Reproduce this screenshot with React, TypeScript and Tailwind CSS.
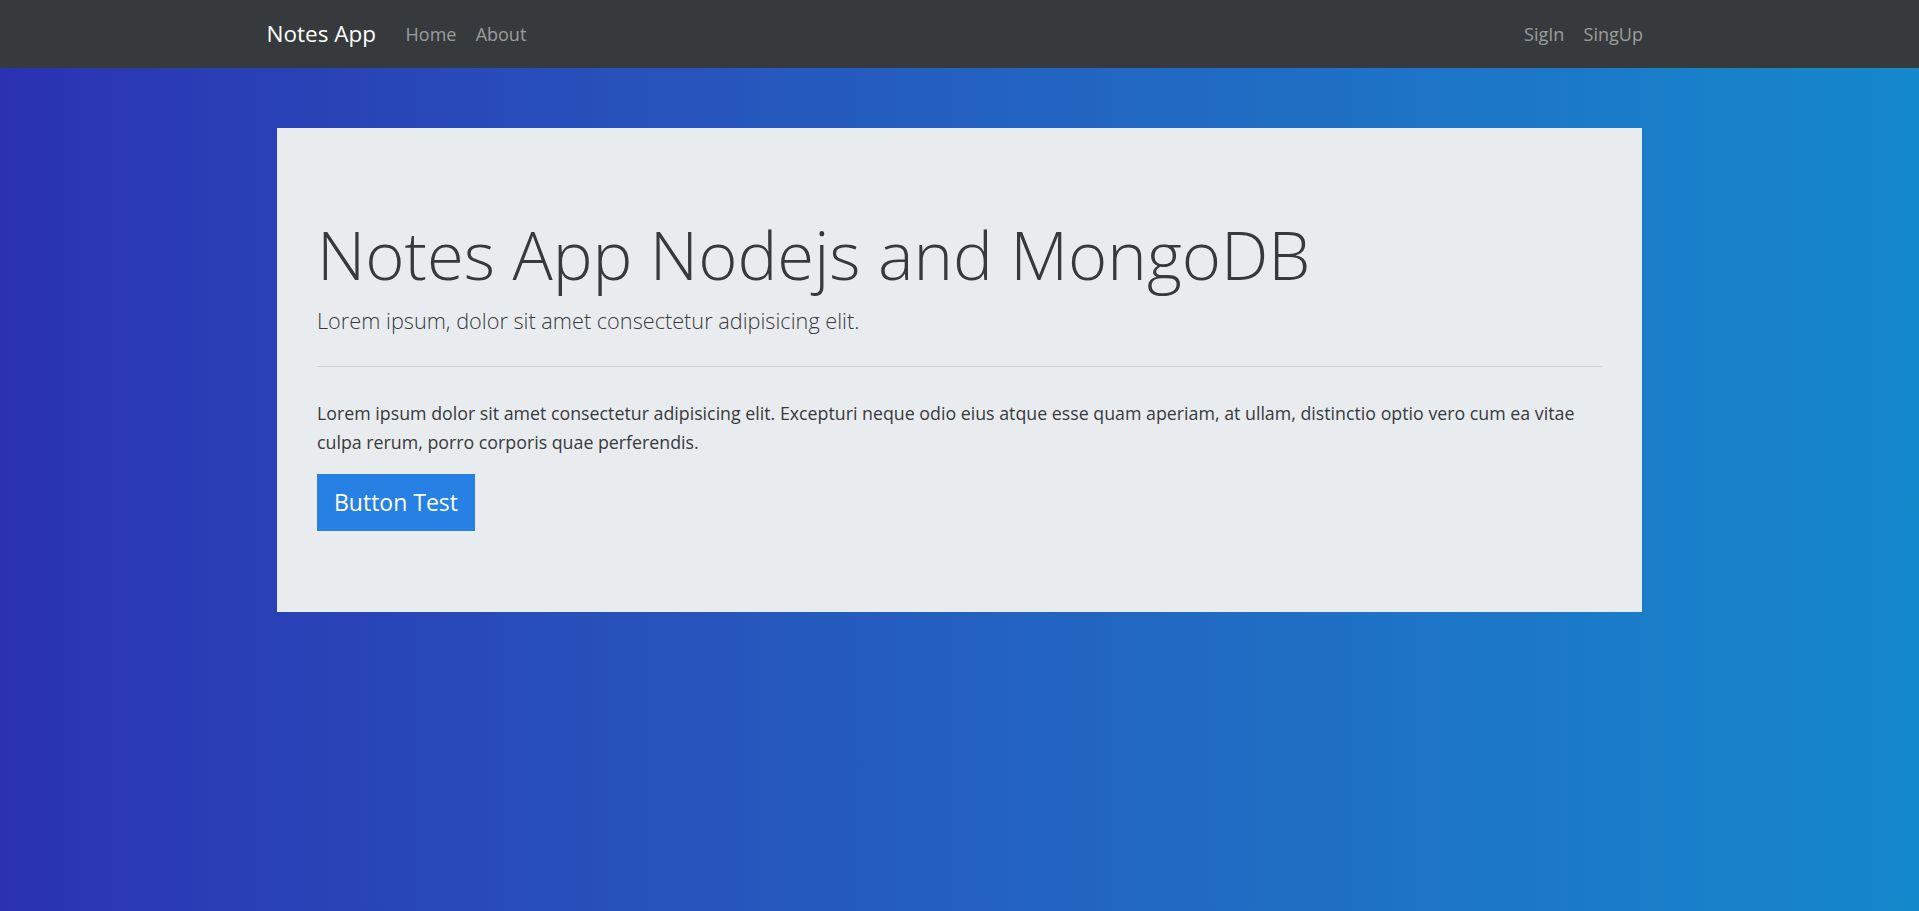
import React from 'react';

const App = () => {
  const leftLinks = ['Home', 'About'];
  const rightLinks = ['SigIn', 'SingUp'];

  return (
    <div className="min-h-screen bg-gradient-to-r from-[#2b32b2] to-[#1488cc] text-[#373a3c] [font-family:'Segoe_UI','Open_Sans',sans-serif]">
      <nav className="h-[68px] bg-[#373a3c]">
        <div className="mx-auto flex h-full w-[1386px] items-center justify-between">
          <div className="flex items-center">
            <a href="#" className="mr-[20px] text-[22.5px] text-white">Notes App</a>
            <ul className="flex">
              {leftLinks.map((link) => (
                <li key={link}>
                  <a href="#" className="px-[9.6px] text-[18px] text-white/50">{link}</a>
                </li>
              ))}
            </ul>
          </div>
          <ul className="flex">
            {rightLinks.map((link) => (
              <li key={link}>
                <a href="#" className="px-[9.6px] text-[18px] text-white/50">{link}</a>
              </li>
            ))}
          </ul>
        </div>
      </nav>

      <main className="mx-auto w-[1365px] pt-[60px]">
        <div className="bg-[#e9ecef] px-[40px] pt-[86px] pb-[81px]">
          <h1 className="text-[67px] leading-[80px] font-light">Notes App Nodejs and MongoDB</h1>
          <p className="mt-[9px] text-[21.7px] leading-[36px] font-light">
            Lorem ipsum, dolor sit amet consectetur adipisicing elit.
          </p>
          <hr className="mt-[27px] mb-[32px] border-t border-black/10" />
          <p className="mb-[17px] text-[17.8px] leading-[29px]">
            Lorem ipsum dolor sit amet consectetur adipisicing elit. Excepturi neque odio eius atque esse quam aperiam, at ullam, distinctio optio vero cum ea vitae culpa rerum, porro corporis quae perferendis.
          </p>
          <a href="#" className="inline-flex h-[57px] w-[158px] items-center justify-center bg-[#2780e3] text-[23px] text-white">
            Button Test
          </a>
        </div>
      </main>
    </div>
  );
};

export default App;
